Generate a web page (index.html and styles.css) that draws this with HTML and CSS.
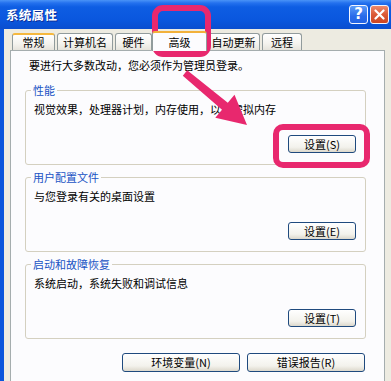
FILE: index.html
```html
<!DOCTYPE html>
<html lang="zh-CN">
<head>
<meta charset="utf-8">
<title>系统属性</title>
<link rel="stylesheet" href="styles.css">
</head>
<body>
<div class="window">
  <div class="titlebar">
    <span class="title">系统属性</span>
    <span class="tb-btn help">?</span>
    <span class="tb-btn close">
      <svg width="11" height="11" viewBox="0 0 11 11"><path d="M1.5 1.5 L9.5 9.5 M9.5 1.5 L1.5 9.5" stroke="#fff" stroke-width="2.2" stroke-linecap="round"/></svg>
    </span>
  </div>
  <div class="frame">
    <div class="main">
      <div class="tabs">
        <span class="tab tab-general hot">常规</span>
        <span class="tab tab-name">计算机名</span>
        <span class="tab tab-hw">硬件</span>
        <span class="tab tab-adv selected">高级</span>
        <span class="tab tab-upd">自动更新</span>
        <span class="tab tab-remote">远程</span>
      </div>
      <div class="panel">
        <p class="intro">要进行大多数改动，您必须作为管理员登录。</p>
        <fieldset class="group first">
          <legend>性能</legend>
          <p class="desc">视觉效果，处理器计划，内存使用，以及虚拟内存</p>
          <div class="btn-row"><button class="btn">设置(S)</button></div>
        </fieldset>
        <fieldset class="group">
          <legend>用户配置文件</legend>
          <p class="desc">与您登录有关的桌面设置</p>
          <div class="btn-row"><button class="btn">设置(E)</button></div>
        </fieldset>
        <fieldset class="group">
          <legend>启动和故障恢复</legend>
          <p class="desc">系统启动，系统失败和调试信息</p>
          <div class="btn-row"><button class="btn">设置(T)</button></div>
        </fieldset>
        <div class="bottom-row">
          <button class="btn wide">环境变量(N)</button>
          <button class="btn wide">错误报告(R)</button>
        </div>
      </div>
    </div>
  </div>
  <div class="mark mark-tab"></div>
  <div class="mark mark-btn"></div>
  <svg class="arrow" width="391" height="381" viewBox="0 0 391 381">
    <polygon points="187.2,70.3 227.8,102.8 234.5,94.8 247,125 215.3,117.8 222,109.8 182.8,75.7" fill="#E8286E"/>
  </svg>
</div>
</body>
</html>
```
FILE: styles.css
```css
html, body {
  margin: 0;
  padding: 0;
}
body {
  width: 391px;
  height: 381px;
  overflow: hidden;
  background: #EDEBE1;
  font-family: "Noto Sans CJK SC", "Noto Sans", sans-serif;
  font-size: 11px;
  color: #000;
}
.window {
  position: relative;
  width: 391px;
  height: 381px;
  display: flex;
  flex-direction: column;
  overflow: hidden;
}
.titlebar {
  flex: none;
  height: 29px;
  display: flex;
  align-items: center;
  padding: 0 2px 0 6px;
  background: linear-gradient(to bottom, #4A93F7 0, #2471EE 3px, #0E5DE3 7px, #0A57DE 20px, #0A4ECF 29px);
}
.title {
  flex: 1;
  color: #fff;
  font-weight: bold;
  font-size: 12.5px;
  letter-spacing: 0.3px;
  text-shadow: 1px 1px 0 #0B2E9A;
}
.tb-btn {
  box-sizing: border-box;
  width: 19px;
  height: 19px;
  border: 1px solid #F4F6FF;
  border-radius: 3px;
  display: flex;
  align-items: center;
  justify-content: center;
}
.help {
  margin-right: 2px;
  background: linear-gradient(to bottom, #5B9CF8, #2A6BEA 60%, #2263E4);
  color: #fff;
  font-family: "DejaVu Sans", sans-serif;
  font-weight: bold;
  font-size: 15px;
  line-height: 1;
}
.close {
  background: linear-gradient(to bottom, #EE8A6C, #DB5A37 50%, #CC4522);
}
.frame {
  flex: 1;
  display: flex;
  border-left: 4px solid #0A55DC;
  padding-left: 6px;
  background: #EDEBE1;
}
.main {
  flex: 1;
  display: flex;
  flex-direction: column;
  min-width: 0;
}
.tabs {
  flex: none;
  height: 21px;
  display: flex;
  align-items: flex-end;
  gap: 2px;
  padding-left: 2px;
}
.tab {
  box-sizing: border-box;
  height: 17px;
  border: 1px solid #919B9C;
  border-bottom: none;
  border-radius: 3px 3px 0 0;
  background: linear-gradient(to bottom, #FFFFFF, #F4F3EE 60%, #E6E4DC);
  display: flex;
  align-items: center;
  justify-content: center;
  font-size: 11px;
  line-height: 1;
}
.tab.hot {
  border-top: 2px solid #F5B83E;
}
.tab-general { width: 43px; }
.tab-name { width: 56px; }
.tab-hw { width: 37px; }
.tab-adv { width: 55px; }
.tab-upd { width: 53px; }
.tab-remote { width: 40px; }
.tab.selected {
  position: relative;
  z-index: 1;
  height: 20px;
  margin: 0 -2px -1px -2px;
  background: #FCFCFE;
  border-top: 2px solid #F2B13A;
  padding-top: 1px;
}
.panel {
  flex: 1;
  margin-right: 6px;
  border: 1px solid #A5ADAE;
  border-bottom: none;
  background: #FCFCFE;
  padding: 6px 18px 0 14px;
  display: flex;
  flex-direction: column;
}
.intro {
  margin: 1px 0 0 4px;
  line-height: 14px;
  white-space: nowrap;
}
.group {
  margin: 5px 0 0 0;
  border: 1px solid #D4D0C0;
  border-radius: 3px;
  padding: 5px 9px 11px 8px;
  min-inline-size: auto;
}
.group.first {
  margin-top: 11px;
}
.group legend {
  padding: 0 2px;
  margin-left: -3px;
  line-height: 14px;
  color: #2053C4;
}
.desc {
  margin: 0;
  line-height: 14px;
  white-space: nowrap;
}
.btn-row {
  display: flex;
  justify-content: flex-end;
  margin-top: 19px;
}
.btn {
  box-sizing: border-box;
  width: 68px;
  height: 18px;
  padding: 0;
  border: 1px solid #1F4A7E;
  border-radius: 3px;
  background: linear-gradient(to bottom, #FFFFFF, #F3F2EC 70%, #DCD8CC);
  font-family: "Noto Sans CJK SC", "Noto Sans", sans-serif;
  font-size: 11px;
  line-height: 1;
  color: #000;
  display: flex;
  align-items: center;
  justify-content: center;
}
.bottom-row {
  display: flex;
  justify-content: flex-end;
  gap: 7px;
  margin: 14px 1px 0 0;
}
.btn.wide {
  width: 118px;
  height: 19px;
}
.mark {
  position: absolute;
  box-sizing: border-box;
  border: 6px solid #E8286E;
  pointer-events: none;
}
.mark-tab {
  left: 152px;
  top: 5px;
  width: 59px;
  height: 52px;
  border-radius: 11px;
}
.mark-btn {
  left: 273px;
  top: 124px;
  width: 97px;
  height: 44px;
  border-radius: 10px;
}
.arrow {
  position: absolute;
  left: 0;
  top: 0;
  pointer-events: none;
}
```
